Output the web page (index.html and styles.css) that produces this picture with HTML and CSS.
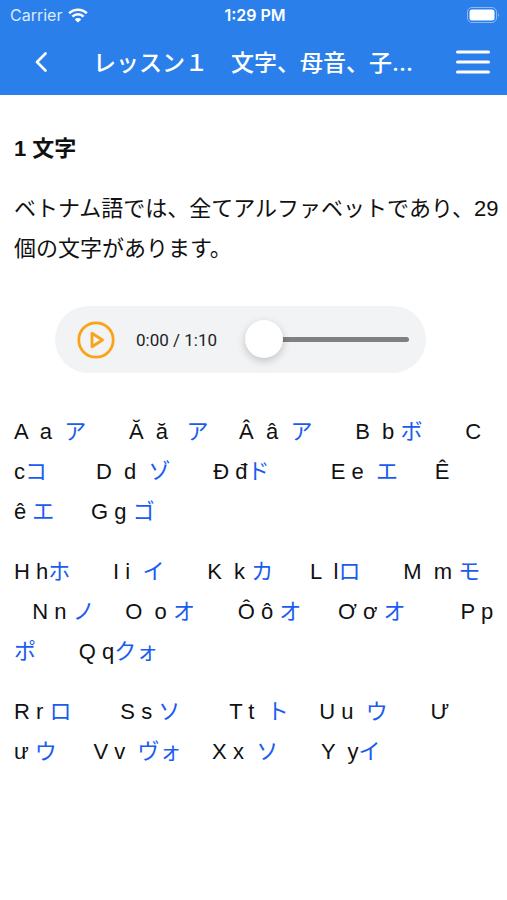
FILE: index.html
```html
<!DOCTYPE html>
<html lang="ja">
<head>
<meta charset="utf-8">
<meta name="viewport" content="width=device-width, initial-scale=1">
<title>レッスン１</title>
<link rel="stylesheet" href="styles.css">
</head>
<body>
<header class="top">
  <div class="status">
    <div class="carrier">
      <span>Carrier</span>
      <svg class="wifi" viewBox="0 0 20 15" aria-hidden="true">
        <path d="M1.2 5.3a12.6 12.6 0 0 1 17.6 0M4.4 8.6a8 8 0 0 1 11.2 0" fill="none" stroke="currentColor" stroke-width="2.6"/>
        <path d="M10 14.6l-3.2-3.2a4.6 4.6 0 0 1 6.4 0z" fill="currentColor"/>
      </svg>
    </div>
    <div class="clock">1:29 PM</div>
    <svg class="battery" viewBox="0 0 33 16" aria-hidden="true">
      <rect x="0.5" y="0.5" width="29" height="15" rx="4.5" fill="none" stroke="currentColor" opacity=".45"/>
      <rect x="2.5" y="2.5" width="25" height="11" rx="2.5" fill="currentColor"/>
      <path d="M31 5.5q1.8 2.5 0 5z" fill="currentColor" opacity=".5"/>
    </svg>
  </div>
  <nav class="bar">
    <button class="icon-button back" type="button" aria-label="戻る">
      <svg viewBox="0 0 12 20" aria-hidden="true"><path d="M10.5 1.5L2 10l8.500 8.500" fill="none" stroke="currentColor" stroke-width="2.600" stroke-linecap="round" stroke-linejoin="round"/></svg>
    </button>
    <h1 class="title">レッスン１　文字、母音、子<span class="dots">...</span></h1>
    <button class="icon-button menu" type="button" aria-label="メニュー">
      <svg viewBox="0 0 34 24" aria-hidden="true"><path d="M1.500 2h31M1.500 12h31M1.500 22h31" fill="none" stroke="currentColor" stroke-width="3" stroke-linecap="round"/></svg>
    </button>
  </nav>
</header>
<main class="content">
  <h2>1 文字</h2>
  <p class="intro">ベトナム語では、全てアルファベットであり、29<br>個の文字があります。</p>
  <div class="player">
    <button class="icon-button play" type="button" aria-label="再生">
      <svg viewBox="0 0 38 38" aria-hidden="true"><circle cx="19" cy="19" r="17.200" fill="none" stroke="currentColor" stroke-width="2.800"/><path d="M15 12.200v13.600L25.500 19z" fill="none" stroke="currentColor" stroke-width="2.800" stroke-linejoin="round"/></svg>
    </button>
    <span class="time">0:00 / 1:10</span>
    <input class="seek" type="range" min="0" max="70" value="0" aria-label="再生位置">
  </div>
  <p class="letters">A  a  <b>ア</b>       Ă  ă   <b>ア</b>     Â  â  <b>ア</b>       B  b <b>ボ</b>       C<br>c<b>コ</b>        D  d  <b>ゾ</b>       Đ đ<b>ド</b>          E e  <b>エ</b>      Ê<br>ê <b>エ</b>      G g <b>ゴ</b></p>
  <p class="letters">H h<b>ホ</b>       I i  <b>イ</b>       K  k <b>カ</b>      L  l<b>ロ</b>       M  m <b>モ</b><br>   N n <b>ノ</b>     O  o <b>オ</b>       Ô ô <b>オ</b>      Ơ ơ <b>オ</b>         P p<br><b>ポ</b>       Q q<b>クォ</b></p>
  <p class="letters">R r <b>ロ</b>        S s <b>ソ</b>        T t  <b>ト</b>     U u  <b>ウ</b>       Ư<br>ư <b>ウ</b>      V v  <b>ヴォ</b>     X x  <b>ソ</b>       Y  y<b>イ</b></p>
</main>
</body>
</html>
```
FILE: styles.css
```css
* {
  box-sizing: border-box;
}

body {
  margin: 0;
  background: #fff;
  color: #111;
  font-family: "Liberation Sans", "Noto Sans CJK JP", sans-serif;
  font-size: 22px;
  line-height: 40px;
}

.top {
  background: #2a7fea;
  color: #fff;
}

.status {
  display: grid;
  grid-template-columns: 1fr auto 1fr;
  align-items: center;
  height: 30px;
  padding: 0 7px 0 10px;
  font: 400 16px/30px Inter, sans-serif;
}

.carrier {
  display: flex;
  align-items: center;
  gap: 6px;
  color: #dcebff;
}

.wifi {
  width: 20px;
  height: 15px;
  color: #fff;
}

.clock {
  font-weight: 600;
}

.battery {
  justify-self: end;
  width: 33px;
  height: 16px;
}

.bar {
  display: flex;
  align-items: center;
  height: 65px;
  padding: 0 17px 2px 23px;
}

.icon-button {
  display: flex;
  align-items: center;
  justify-content: center;
  flex: none;
  padding: 0;
  border: 0;
  background: none;
  color: inherit;
}

.back {
  width: 36px;
  height: 44px;
}

.back svg {
  width: 12px;
  height: 20px;
}

.title {
  flex: 1;
  margin: 0 0 0 34px;
  overflow: hidden;
  white-space: nowrap;
  font: 500 23px/40px "Noto Sans CJK JP", sans-serif;
}

.dots {
  font-family: Inter, sans-serif;
}

.menu svg {
  width: 34px;
  height: 24px;
}

.content {
  padding: 34px 6px 20px 14px;
}

h2 {
  margin: 0 0 20px;
  font-size: 22px;
  line-height: 40px;
}

.intro {
  margin: 0;
}

.player {
  display: flex;
  align-items: center;
  max-width: 371px;
  height: 67px;
  margin: 37px 41px 39px;
  padding: 0 17px 0 22px;
  border-radius: 34px;
  background: #f1f3f4;
}

.play {
  color: #f9a31a;
}

.play svg {
  width: 38px;
  height: 38px;
}

.time {
  margin: 0 28px 0 21px;
  color: #222;
  font: 400 17px/24px Roboto, sans-serif;
  white-space: nowrap;
}

.seek {
  flex: 1;
  min-width: 0;
  height: 38px;
  margin: 0;
  appearance: none;
  background: none;
}

.seek::-webkit-slider-runnable-track {
  height: 5px;
  border-radius: 3px;
  background: #808080;
}

.seek::-webkit-slider-thumb {
  appearance: none;
  width: 38px;
  height: 38px;
  margin-top: -17px;
  border-radius: 50%;
  background: #fff;
  box-shadow: 0 3px 8px rgba(0, 0, 0, 0.2);
}

.letters {
  margin: 0 0 20px;
  white-space: pre-wrap;
}

.letters b {
  color: #1a5cf0;
  font-weight: 400;
}
```
